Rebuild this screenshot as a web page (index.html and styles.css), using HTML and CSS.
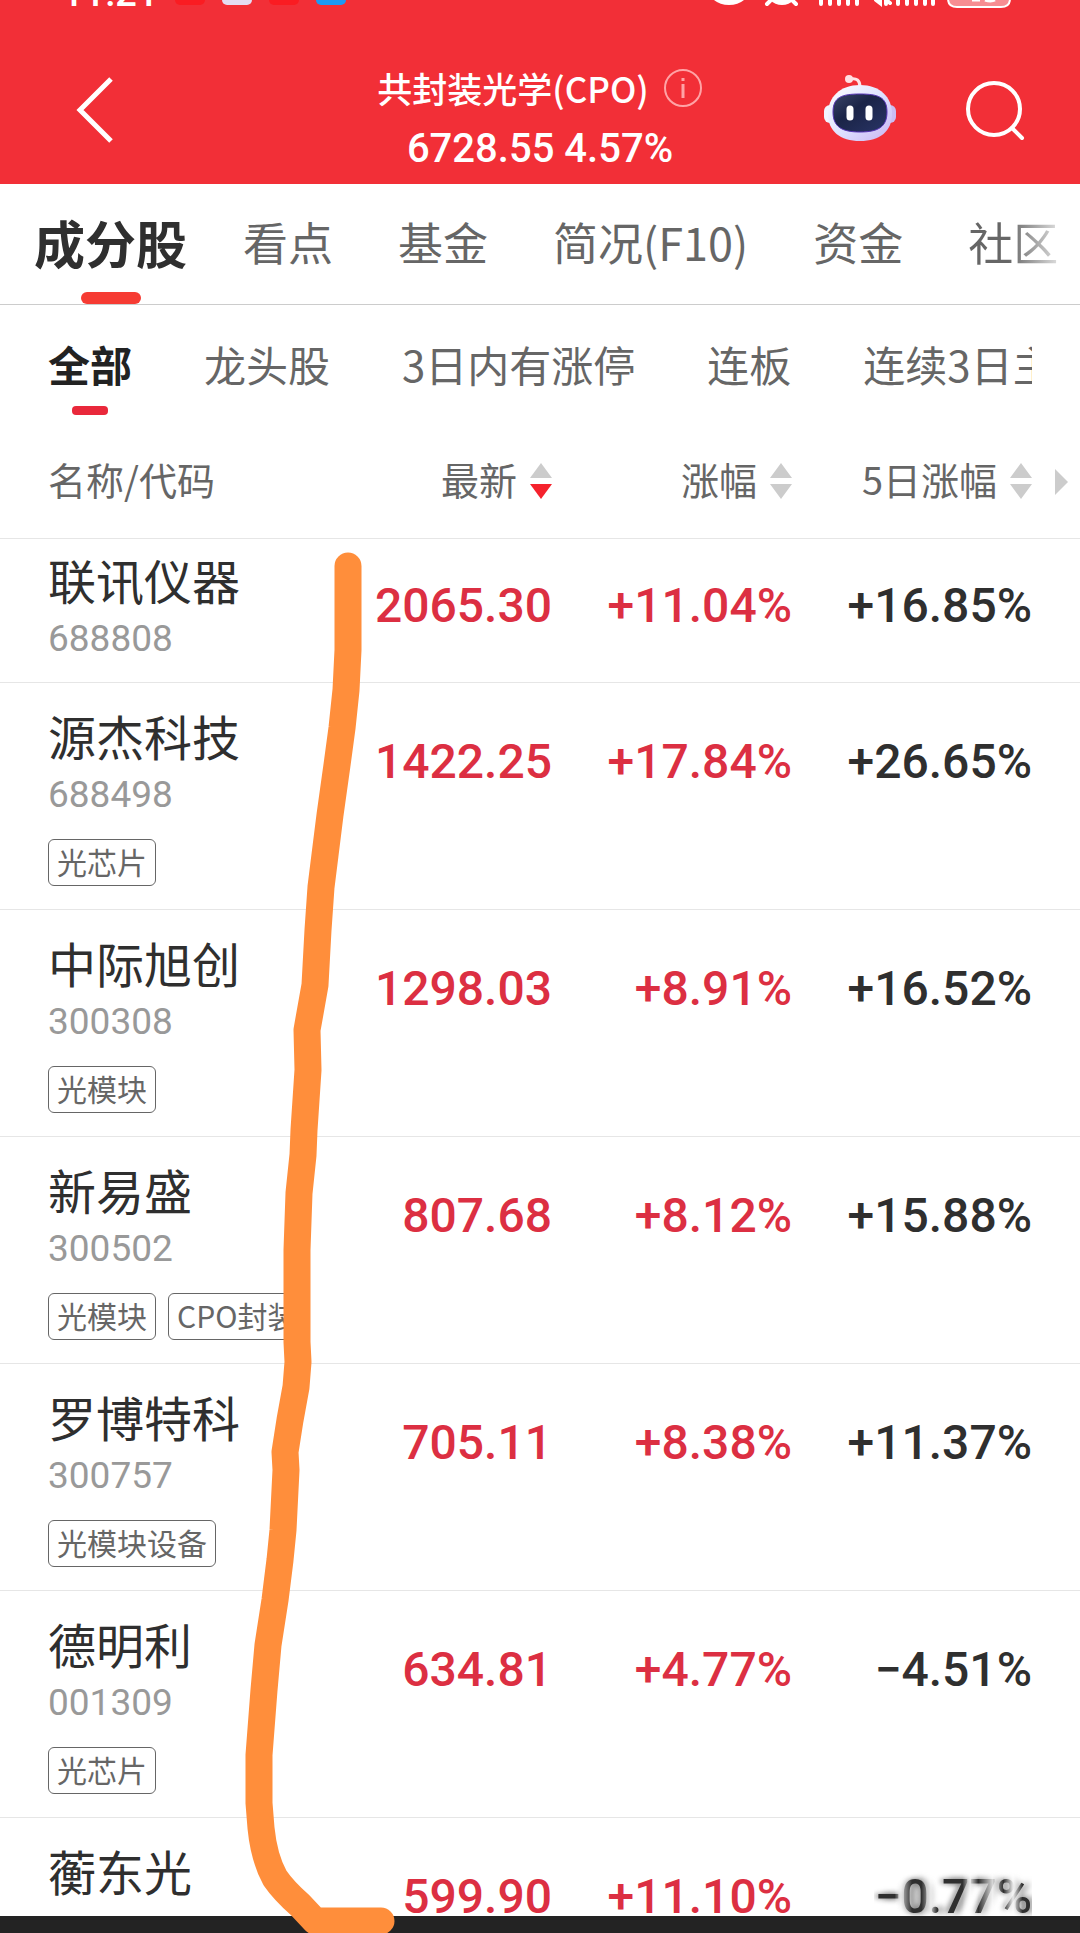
FILE: index.html
```html
<!DOCTYPE html>
<html lang="zh-CN">

<head>
    <meta charset="UTF-8">
    <meta name="viewport" content="width=device-width, initial-scale=1.0">
    <title>共封装光学(CPO)</title>
    <link rel="stylesheet" href="styles.css">
</head>

<body>
    <div class="app">
        <header class="header">
            <div class="status-bar">
                <div class="status-left">
                    <span class="clock">11:21</span>
                    <span class="status-icon icon-red"></span>
                    <span class="status-icon icon-white"></span>
                    <span class="status-icon icon-red"></span>
                    <span class="status-icon icon-blue"></span>
                </div>
                <svg class="status-right" width="302" height="9" viewBox="0 0 302 9" aria-hidden="true">
                    <path d="M0 0h30q-6 5-15 5T0 0z" fill="#fff"/>
                    <path d="M56 0h24q-5 5-12 5t-12-5z" fill="#fff"/>
                    <g fill="none" stroke="#fff" stroke-width="4" stroke-linecap="round">
                        <path d="M53 4l3-3M82 4l-3-3"/>
                        <path d="M107 0v4M116 0v4M125 0v4M134 0v4M143 0v4"/>
                        <path d="M162 0l4 3V0M172 4V0l4 3M184 0v4M193 0v4M202 0v4M211 0v4M219 0v4"/>
                    </g>
                    <path d="M234 0q1 7 9 7h44q8 0 9-7" fill="#f78d92" stroke="#fff" stroke-width="2"/>
                    <path d="M258 0h8M271 0q6 2 10 0" stroke="#fff" stroke-width="3"/>
                </svg>
            </div>
            <div class="title-bar">
                <button class="icon-btn back-btn" aria-label="返回">
                    <svg width="38" height="68" viewBox="0 0 38 68">
                        <path d="M36 3L5 34l31 31" fill="none" stroke="#fff" stroke-width="5"/>
                    </svg>
                </button>
                <div class="title">
                    <h1>共封装光学(CPO)
                        <svg width="40" height="40" viewBox="0 0 40 40" aria-hidden="true">
                            <circle cx="20" cy="20" r="18" fill="none" stroke="#ffa3a6" stroke-width="2"/>
                            <path d="M20 16v14M20 10v3" stroke="#ffa3a6" stroke-width="3"/>
                        </svg>
                    </h1>
                    <p>6728.55 4.57%</p>
                </div>
                <div class="actions">
                    <button class="icon-btn" aria-label="智能助手">
                        <svg width="72" height="72" viewBox="0 0 72 72">
                            <defs>
                                <linearGradient id="shell" x1="0" y1="0" x2="1" y2="1">
                                    <stop offset="0" stop-color="#fff"/>
                                    <stop offset="0.5" stop-color="#dfe3ff"/>
                                    <stop offset="1" stop-color="#c9b4f2"/>
                                </linearGradient>
                                <linearGradient id="face" x1="0" y1="0" x2="1" y2="1">
                                    <stop offset="0" stop-color="#3a4468"/>
                                    <stop offset="0.4" stop-color="#1b2447"/>
                                    <stop offset="1" stop-color="#283466"/>
                                </linearGradient>
                            </defs>
                            <path d="M26 5q10-2 10 8" fill="none" stroke="#ffe2e6" stroke-width="3"/>
                            <circle cx="25" cy="5" r="4" fill="#ffdfe2"/>
                            <rect x="0" y="31" width="12" height="18" rx="6" fill="#f2f4ff"/>
                            <rect x="60" y="31" width="12" height="18" rx="6" fill="#cbbdf3"/>
                            <path d="M36 11C56 11 68 23 68 40S56 67 36 67 4 57 4 40 16 11 36 11z" fill="url(#shell)"/>
                            <path d="M36 20c18 0 27 3 27 18s-9 20-27 20-27-5-27-20 9-18 27-18z" fill="url(#face)" stroke="#5634b5" stroke-width="1"/>
                            <path d="M26 35v8M45 35v8" stroke="#fff" stroke-width="7" stroke-linecap="round"/>
                        </svg>
                    </button>
                    <button class="icon-btn" aria-label="搜索">
                        <svg width="62" height="62" viewBox="0 0 62 62">
                            <circle cx="30" cy="30" r="26" fill="none" stroke="#fff" stroke-width="4"/>
                            <path d="M48 49l10 10" stroke="#fff" stroke-width="4" stroke-linecap="round"/>
                        </svg>
                    </button>
                </div>
            </div>
        </header>

        <nav class="tabs">
            <a class="active" href="#">成分股</a>
            <a href="#">看点</a>
            <a href="#">基金</a>
            <a href="#">简况(F10)</a>
            <a href="#">资金</a>
            <a href="#">社区</a>
        </nav>

        <nav class="filters">
            <div class="filters-scroll">
                <a class="active" href="#">全部</a>
                <a href="#">龙头股</a>
                <a href="#">3日内有涨停</a>
                <a href="#">连板</a>
                <a href="#">连续3日主力</a>
            </div>
        </nav>

        <main class="list">
            <table>
                <thead>
                    <tr>
                        <th class="col-name">名称/代码</th>
                        <th><button class="sort">最新<svg width="22" height="36" viewBox="0 0 22 36"><path d="M11 0l11 15H0z" fill="#ccc"/><path d="M11 36L0 21h22z" fill="#f5222d"/></svg></button></th>
                        <th><button class="sort">涨幅<svg width="22" height="36" viewBox="0 0 22 36"><path d="M11 0l11 15H0zM11 36L0 21h22z" fill="#ccc"/></svg></button></th>
                        <th class="col-last"><button class="sort">5日涨幅<svg width="22" height="36" viewBox="0 0 22 36"><path d="M11 0l11 15H0zM11 36L0 21h22z" fill="#ccc"/></svg></button><svg class="more" width="13" height="26" viewBox="0 0 13 26"><path d="M0 0l13 13L0 26z" fill="#ccc"/></svg></th>
                    </tr>
                </thead>
                <tbody>
                    <tr class="scrolled">
                        <td class="col-name"><div class="name">联讯仪器</div><div class="code">688808</div></td>
                        <td class="up">2065.30</td>
                        <td class="up">+11.04%</td>
                        <td class="col-last">+16.85%</td>
                    </tr>
                    <tr>
                        <td class="col-name"><div class="name">源杰科技</div><div class="code">688498</div><div class="tags"><span>光芯片</span></div></td>
                        <td class="up">1422.25</td>
                        <td class="up">+17.84%</td>
                        <td class="col-last">+26.65%</td>
                    </tr>
                    <tr>
                        <td class="col-name"><div class="name">中际旭创</div><div class="code">300308</div><div class="tags"><span>光模块</span></div></td>
                        <td class="up">1298.03</td>
                        <td class="up">+8.91%</td>
                        <td class="col-last">+16.52%</td>
                    </tr>
                    <tr>
                        <td class="col-name"><div class="name">新易盛</div><div class="code">300502</div><div class="tags"><span>光模块</span><span>CPO封装</span></div></td>
                        <td class="up">807.68</td>
                        <td class="up">+8.12%</td>
                        <td class="col-last">+15.88%</td>
                    </tr>
                    <tr>
                        <td class="col-name"><div class="name">罗博特科</div><div class="code">300757</div><div class="tags"><span>光模块设备</span></div></td>
                        <td class="up">705.11</td>
                        <td class="up">+8.38%</td>
                        <td class="col-last">+11.37%</td>
                    </tr>
                    <tr>
                        <td class="col-name"><div class="name">德明利</div><div class="code">001309</div><div class="tags"><span>光芯片</span></div></td>
                        <td class="up">634.81</td>
                        <td class="up">+4.77%</td>
                        <td class="col-last">−4.51%</td>
                    </tr>
                    <tr>
                        <td class="col-name"><div class="name">蘅东光</div><div class="code">920045</div></td>
                        <td class="up">599.90</td>
                        <td class="up">+11.10%</td>
                        <td class="col-last"><span class="smear">−0.77%</span></td>
                    </tr>
                </tbody>
            </table>
        </main>

        <footer class="bottom-bar"></footer>

        <!-- hand-drawn marker line -->
        <svg class="marker" viewBox="0 0 1080 1933" aria-hidden="true">
            <path d="M348 566V650L346 690 342 728 337 765 330 815 325 855 321 887 318 930 315 985 307 1030 308 1070 304 1130 303 1155 299 1193 297 1250V1342L298 1362 296 1387 290 1420 285 1452 286 1470 283 1530 280 1560 275 1600 268 1645 264 1690 259 1755V1803L261 1828 Q264 1858 275 1878 Q284 1891 300 1905 L315 1921H381"/>
        </svg>
    </div>
</body>

</html>
```
FILE: styles.css
```css
* {
    box-sizing: border-box;
}

body {
    margin: 0;
    background-color: #fff;
    color: #2f2f2f;
    font-family: "Noto Sans CJK SC", sans-serif;
}

a {
    color: inherit;
    text-decoration: none;
}

button {
    padding: 0;
    border: none;
    background: none;
    color: inherit;
    font: inherit;
    cursor: pointer;
}

svg {
    display: block;
}

.app {
    position: relative;
    display: flex;
    flex-direction: column;
    height: 100vh;
    overflow: hidden;
}

/* header */
.header {
    flex: none;
    background-color: #f22f37;
    color: #fff;
}

.status-bar {
    display: flex;
    justify-content: space-between;
    height: 9px;
    padding: 0 64px 0 62px;
    overflow: hidden;
}

.status-left {
    display: flex;
    align-items: flex-start;
    gap: 17px;
}

.clock {
    align-self: flex-end;
    font: 500 38px/32px Roboto, sans-serif;
}

.status-icon {
    width: 30px;
    height: 5px;
    border-radius: 0 0 8px 8px;
}

.icon-red {
    background-color: #fa1c22;
}

.icon-white {
    background-color: #e4dcf2;
}

.icon-blue {
    background-color: #1b9af5;
}

.title-bar {
    display: grid;
    grid-template-columns: 1fr auto 1fr;
    align-items: start;
    padding: 49px 54px 4px 75px;
}

.icon-btn {
    display: flex;
    align-items: center;
    height: 104px;
}

.title {
    margin-left: -21px;
    text-align: center;
}

.title h1 {
    display: flex;
    align-items: center;
    gap: 14px;
    margin: 0;
    font-size: 35px;
    font-weight: 500;
    line-height: 60px;
}

.title p {
    margin: 0;
    font: 500 40px/62px Roboto, sans-serif;
}

.actions {
    display: flex;
    justify-content: flex-end;
    gap: 68px;
}

/* tabs */
.tabs {
    flex: none;
    display: flex;
    align-items: flex-start;
    gap: 65px;
    height: 121px;
    padding: 0 24px 0 34px;
    border-bottom: 1px solid #ccc;
    overflow: hidden;
    color: #666;
    font-size: 45px;
    line-height: 116px;
    white-space: nowrap;
}

.tabs a:last-child {
    color: transparent;
    background: linear-gradient(to right, #666 45%, #ddd);
    background-clip: text;
}

.tabs .active,
.filters .active {
    position: relative;
    font-weight: 700;
}

.tabs .active {
    height: 120px;
    margin-right: -9px;
    color: #2f2f2f;
    font-size: 51px;
}

.tabs .active::after,
.filters .active::after {
    content: "";
    position: absolute;
    left: 50%;
    bottom: 0;
    transform: translateX(-50%);
}

.tabs .active::after {
    width: 60px;
    height: 12px;
    border-radius: 6px;
    background-color: #f63b33;
}

.filters {
    flex: none;
    padding: 0 48px;
}

.filters-scroll {
    display: flex;
    gap: 72px;
    height: 110px;
    padding-top: 12px;
    overflow: hidden;
    color: #666;
    font-size: 42px;
    line-height: 94px;
    white-space: nowrap;
}

.filters .active {
    color: #222;
}

.filters .active::after {
    width: 36px;
    height: 9px;
    border-radius: 4px;
    background-color: #e9283b;
}

/* stock list */
.list {
    flex: 1;
    min-height: 0;
    overflow: hidden;
}

table {
    width: 100%;
    border-collapse: separate;
    border-spacing: 0;
    table-layout: fixed;
}

th,
td {
    width: 240px;
    padding: 0;
    border-bottom: 1px solid #e6e6e6;
    text-align: right;
    vertical-align: top;
}

th {
    height: 124px;
    padding-top: 36px;
    color: #666;
    font-size: 38px;
    font-weight: 400;
    line-height: 56px;
}

td {
    padding-top: 51px;
    font: 500 48px/56px Roboto, sans-serif;
}

.col-name {
    width: auto;
    padding-left: 48px;
    text-align: left;
}

td.col-name {
    padding-top: 24px;
    padding-bottom: 23px;
    font-family: "Noto Sans CJK SC", sans-serif;
    font-weight: 400;
}

.col-last {
    position: relative;
    width: 288px;
    padding-right: 48px;
}

.sort {
    display: inline-flex;
    align-items: center;
    gap: 13px;
}

.sort svg {
    margin-top: 4px;
}

.more {
    position: absolute;
    top: 54px;
    right: 12px;
}

.up {
    color: #dc2f42;
}

.code {
    margin-top: 12px;
    color: #999;
    font: 400 37px/40px Roboto, sans-serif;
}

.tags {
    display: flex;
    gap: 12px;
    margin-top: 24px;
    overflow: hidden;
    white-space: nowrap;
}

.tags span {
    flex: none;
    padding: 0 8px 2px;
    border: 1px solid #666;
    border-radius: 6px;
    color: #666;
    font-size: 30px;
    line-height: 43px;
}

/* first row is partly scrolled under the table head */
.scrolled td {
    padding-top: 39px;
}

.scrolled td.col-name {
    padding-top: 12px;
    padding-bottom: 23px;
}

.smear {
    display: inline-block;
    text-shadow: 5px 0 6px #777, -3px 0 5px #999;
    mask-image: linear-gradient(to right, #000 13%, rgba(0, 0, 0, 0.3) 17%, #000 24%, #000 30%, rgba(0, 0, 0, 0.3) 36%, #000 40%, #000 56%, rgba(0, 0, 0, 0.2) 61%, #000 66%, rgba(0, 0, 0, 0.2) 75%, #000 82%, rgba(0, 0, 0, 0.1) 88%, #000 94%);
}

.bottom-bar {
    flex: none;
    height: 17px;
    background-color: #232323;
}

.marker {
    position: absolute;
    top: 0;
    left: 0;
    width: 100%;
    pointer-events: none;
}

.marker path {
    fill: none;
    stroke: #ff8e3b;
    stroke-width: 27;
    stroke-linecap: round;
    stroke-linejoin: round;
}
```
